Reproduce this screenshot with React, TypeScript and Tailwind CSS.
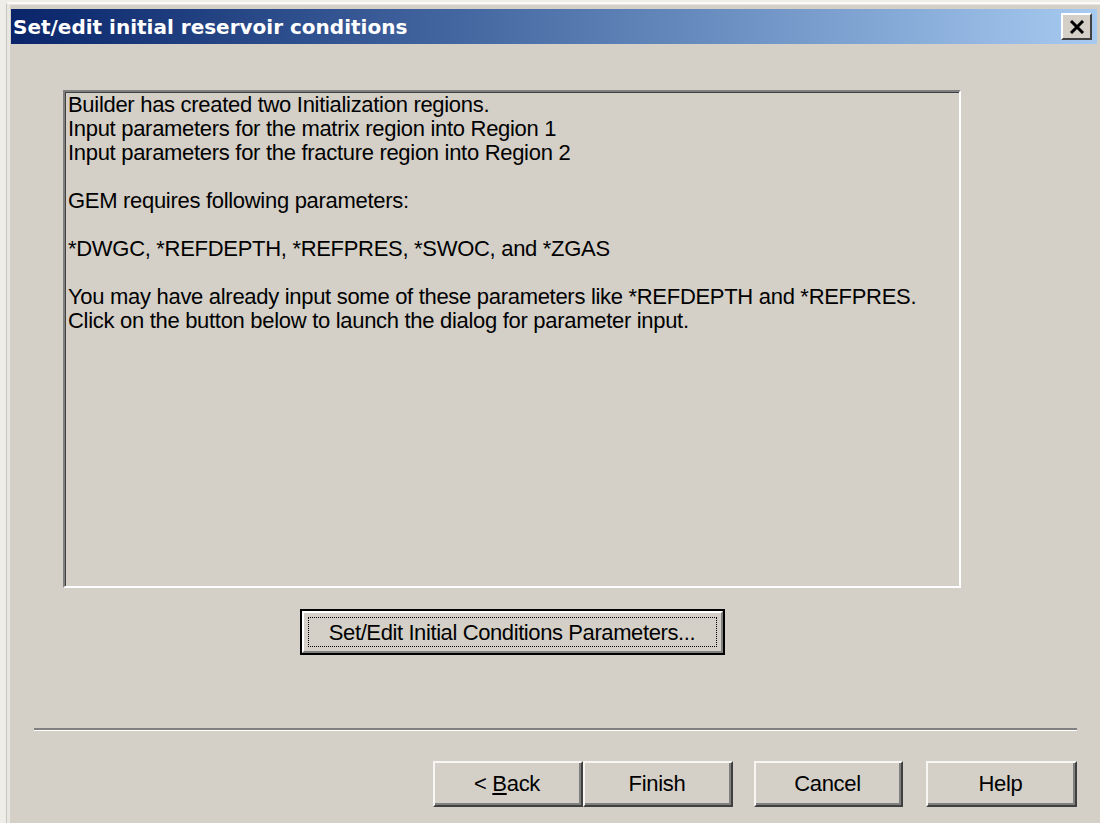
import { ReactNode } from 'react'

const bodyText = [
  'Builder has created two Initialization regions.',
  'Input parameters for the matrix region into Region 1',
  'Input parameters for the fracture region into Region 2',
  '',
  'GEM requires following parameters:',
  '',
  '*DWGC, *REFDEPTH, *REFPRES, *SWOC, and *ZGAS',
  '',
  'You may have already input some of these parameters like *REFDEPTH and *REFPRES.',
  'Click on the button below to launch the dialog for parameter input.',
]

/* classic raised push button */
function Button({ children, width = 'w-[150px]' }: { children: ReactNode; width?: string }) {
  return (
    <div
      className={`${width} h-[46px] border-t-2 border-l-2 border-t-[#f7f6f3] border-l-[#f7f6f3] border-b-2 border-r-2 border-b-[#404040] border-r-[#404040]`}
    >
      <div className="h-full w-full border-b-2 border-r-2 border-b-[#808080] border-r-[#808080] flex items-center justify-center">
        {children}
      </div>
    </div>
  )
}

export default function App() {
  return (
    <div
      className="w-[1100px] h-[823px] overflow-hidden bg-[#efede8] pl-[6px] pt-[2px] text-black"
      style={{ fontFamily: '"Liberation Sans", Arial, sans-serif' }}
    >
      <div className="h-full border-l border-t-2 border-l-[#c9c6bf] border-t-[#fbfaf8] bg-[#e9e7e2] pl-[3px] pt-[1px]">
        <div className="h-full bg-[#d4d0c8] pl-px pt-[4px] pr-[3px]">
          {/* TITLE BAR */}
          <div className="h-[35px] flex items-center justify-between bg-gradient-to-r from-[#0a246a] to-[#a6caf0] pl-[2px] pr-[5px]">
            <span className="text-white font-bold text-[20px] font-['DejaVu_Sans',sans-serif]">
              Set/edit initial reservoir conditions
            </span>
            <div className="w-[31px] h-[27px] bg-[#d4d0c8] border-t-2 border-l-2 border-t-white border-l-white border-b-2 border-r-2 border-b-[#404040] border-r-[#404040] flex items-center justify-center">
              <svg width="16" height="14" viewBox="0 0 16 14">
                <path d="M2 1 L14 13 M14 1 L2 13" stroke="#000" strokeWidth="3" />
              </svg>
            </div>
          </div>

          {/* MESSAGE BOX */}
          <div className="pl-[52px] pt-[46px]">
            <div className="w-[898px] h-[498px] border-t-2 border-l-2 border-t-[#808080] border-l-[#808080] border-b-2 border-r-2 border-b-white border-r-white">
              <div className="h-full border-t border-l border-t-[#404040] border-l-[#404040] pl-[2px] text-[22px] leading-[24px] tracking-[-0.3px]">
                {bodyText.map((line, i) => (
                  <div key={i} className="h-[24px] whitespace-pre">
                    {line}
                  </div>
                ))}
              </div>
            </div>

            {/* LAUNCH BUTTON */}
            <div className="w-[898px] flex justify-center pt-[21px]">
              <div className="w-[425px] h-[46px] border-2 border-black">
                <div className="h-full border-t-2 border-l-2 border-t-white border-l-white border-b-2 border-r-2 border-b-[#808080] border-r-[#808080] p-[4px]">
                  <div className="h-full border border-dotted border-black flex items-center justify-center text-[22px] tracking-[-0.4px]">
                    Set/Edit Initial Conditions Parameters...
                  </div>
                </div>
              </div>
            </div>
          </div>

          {/* SEPARATOR */}
          <div className="ml-[23px] mr-[20px] mt-[73px] border-t-2 border-b border-t-[#808080] border-b-white" />

          {/* WIZARD BUTTONS */}
          <div className="flex justify-end pr-[20px] pt-[30px] text-[22px] tracking-[-0.3px]">
            <Button>
              <span>
                &lt; <span className="underline">B</span>ack
              </span>
            </Button>
            <Button>Finish</Button>
            <div className="w-[21px]" />
            <Button width="w-[149px]">Cancel</Button>
            <div className="w-[23px]" />
            <Button width="w-[151px]">Help</Button>
          </div>
        </div>
      </div>
    </div>
  )
}
